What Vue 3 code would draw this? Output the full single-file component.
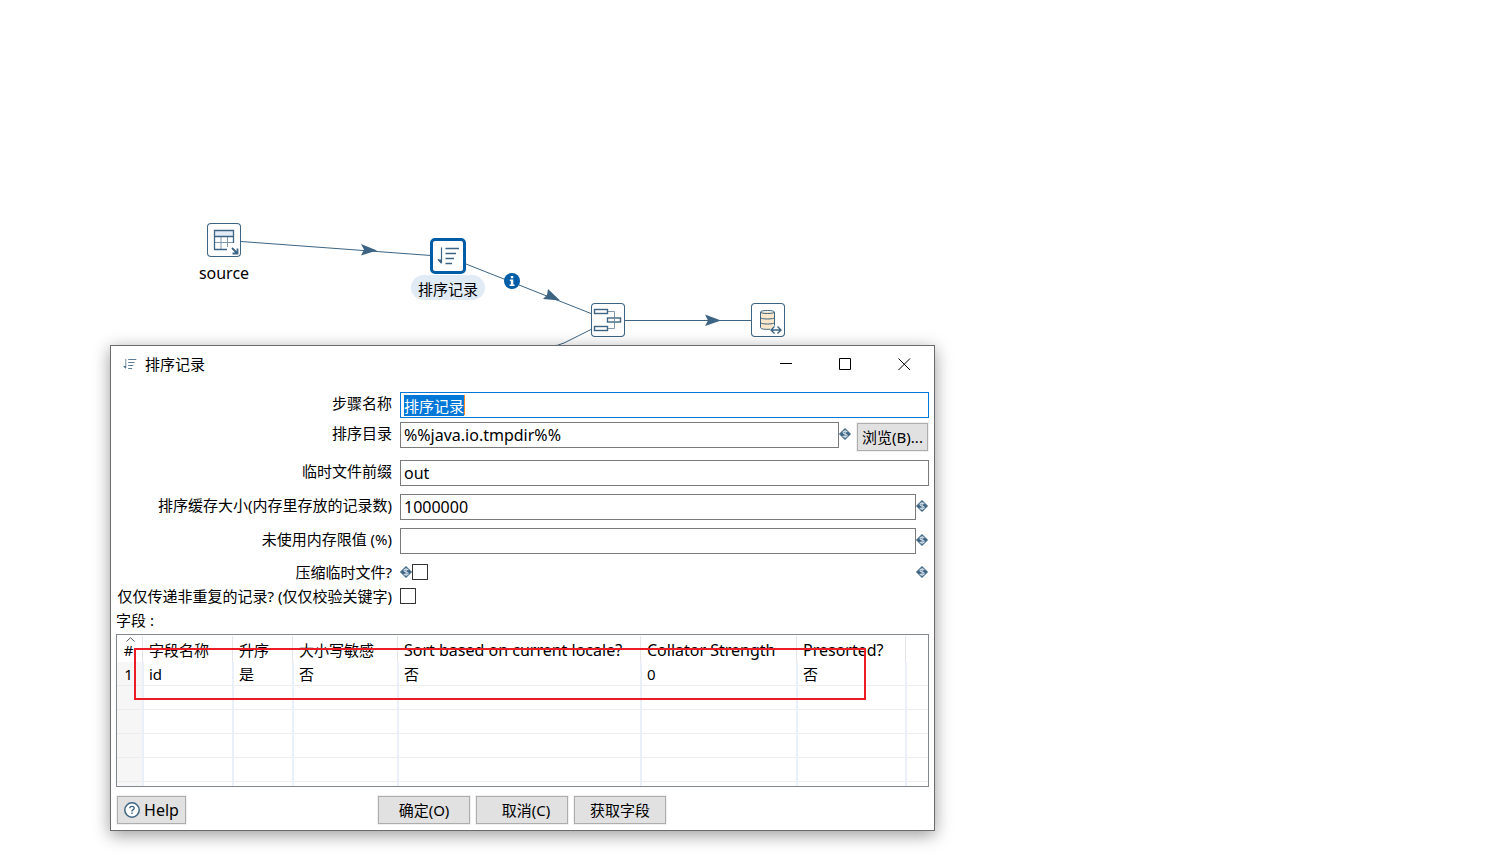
<script setup>
import { ref, onMounted } from 'vue'

const stepName = ref('排序记录')
const sortDir = ref('%%java.io.tmpdir%%')
const prefix = ref('out')
const cacheSize = ref('1000000')
const memoryLimit = ref('')
const compress = ref(false)
const unique = ref(false)
const nameInput = ref(null)

const columns = [
  { name: '字段名称' },
  { name: '升序' },
  { name: '大小写敏感' },
  { name: 'Sort based on current locale?', latin: true },
  { name: 'Collator Strength', latin: true },
  { name: 'Presorted?', latin: true }
]
const rows = [
  ['1', 'id', '是', '否', '否', '0', '否'],
  ['', '', '', '', '', '', ''],
  ['', '', '', '', '', '', ''],
  ['', '', '', '', '', '', ''],
  ['', '', '', '', '', '', '']
]

onMounted(() => {
  nameInput.value.focus()
  nameInput.value.select()
})
</script>

<template>
  <main class="canvas">
    <svg class="defs" width="0" height="0" aria-hidden="true">
      <symbol id="sort" viewBox="7 8 23 20">
        <path d="M11.5 9.5V24.5M8 21.5L11.5 25" fill="none" stroke="#3d6482" stroke-width="1.2" />
        <path d="M7.5 21.5H11.5V26Z" fill="#3d6482" />
        <path d="M15.500 10.500H29M15.500 15.500H26M15.500 20.500H24M15.500 25.500H22" fill="none" stroke="#3d6482" stroke-width="1.4" />
      </symbol>
      <symbol id="variable" viewBox="0 0 12 12">
        <path d="M6 .5L11.500 6L6 11.500L.5 6Z" fill="#3d6482" stroke="#3d6482" stroke-width="1" stroke-linejoin="round" />
        <path d="M8.200 4.200C7.600 2.900 4 2.700 4 4.600C4 6.500 8.200 5.500 8.200 7.500C8.200 9.300 4.500 9.200 3.800 7.900M6.100 2V10" fill="none" stroke="#c9d6e0" stroke-width="1.2" />
      </symbol>
    </svg>

    <svg class="hops" width="800" height="360" aria-hidden="true">
      <g fill="none" stroke="#3d6482">
        <path d="M241 241.500L431 255.500M466 264L591 313.500M625 320.500H751M591 329.500L564 343Q558 346 550 346" />
      </g>
      <g fill="#3d6482">
        <path d="M377 250.500L361 244L364 249.700L361 255.500Z" />
        <path d="M560 300.500L548 289L547 295L543 299Z" />
        <path d="M721 320.500L705 314.500L708 320.500L705 326Z" />
      </g>
      <circle cx="512" cy="281" r="8" fill="#005da6" />
      <path d="M510.800 276H513.300V278.200H510.800ZM509.800 279.500H513.300V284.500H514.500V286H509.600V284.500H510.800V281H509.800Z" fill="#fff" />
    </svg>

    <div class="node source">
      <svg width="34" height="34" viewBox="0 0 34 34" aria-hidden="true">
        <path d="M7.500 7.500H26.500V13.500H7.500Z" fill="#e1ebf5" />
        <path d="M14 13.500V26M20.500 13.500V24M8 19.500H26" fill="none" stroke="#7e99ad" />
        <path d="M20 26.500H7.500V7.500H26.500V20M7.500 13.500H26.500" fill="none" stroke="#3d6482" stroke-width="1.3" />
        <path d="M25 25L30 30M30.500 25.500V30.500H25.500" fill="none" stroke="#3d6482" stroke-width="1.8" />
      </svg>
    </div>
    <span class="caption source-caption latin">source</span>
    <div class="node sorter">
      <svg width="23" height="20" aria-hidden="true"><use href="#sort" /></svg>
    </div>
    <span class="caption sorter-caption">排序记录</span>
    <div class="node merge">
      <svg width="34" height="34" viewBox="0 0 34 34" aria-hidden="true">
        <path d="M17 8.500H23.500V25.500H17" fill="none" stroke="#7e99ad" />
        <g fill="#fff" stroke="#3d6482" stroke-width="1.4">
          <rect x="3.500" y="6.500" width="13" height="4" />
          <rect x="16.500" y="15" width="13" height="4" />
          <rect x="3.500" y="23.500" width="13" height="4" />
        </g>
        <path d="M23.500 15V19" stroke="#7e99ad" />
      </svg>
    </div>
    <div class="node database">
      <svg width="34" height="34" viewBox="0 0 34 34" aria-hidden="true">
        <path d="M9.500 9V24.500C9.500 27 23.500 27 23.500 24.500V9Z" fill="#fde7cb" />
        <path d="M19 26.200C14 26.700 9.500 26 9.500 24.500V9C9.500 7 23.500 7 23.500 9V23M9.500 9C9.500 11 23.500 11 23.500 9M9.500 14.500C9.500 16.500 23.500 16.500 23.500 14.500M9.500 19.500C9.500 21.500 23.500 21.500 23.500 19.500" fill="none" stroke="#3d6482" />
        <path d="M19 27L23 22.500H27L31 27L27 31H23Z" fill="#fff" />
        <path d="M23.500 23.500L20 27L23.500 30.500M26.500 23.500L30 27L26.500 30.500M20.500 27H29.500" fill="none" stroke="#3d6482" stroke-width="1.4" />
      </svg>
    </div>

    <section class="dialog" role="dialog" aria-labelledby="dialog-title">
      <header class="titlebar">
        <svg class="title-icon" width="14" height="12" aria-hidden="true"><use href="#sort" /></svg>
        <h1 id="dialog-title">排序记录</h1>
        <button class="control" type="button" aria-label="Minimize">
          <svg width="13" height="13" viewBox="0 0 13 13"><path d="M0 5.500H12" stroke="#000" /></svg>
        </button>
        <button class="control" type="button" aria-label="Maximize">
          <svg width="13" height="13" viewBox="0 0 13 13"><path d="M.5 .5H11.500V11.500H.5Z" fill="none" stroke="#000" /></svg>
        </button>
        <button class="control" type="button" aria-label="Close">
          <svg width="13" height="13" viewBox="0 0 13 13"><path d="M.5 .5L12 12M12 .5L.5 12" stroke="#000" /></svg>
        </button>
      </header>

      <form class="form" @submit.prevent>
        <div class="row tight">
          <label for="step">步骤名称</label>
          <div class="field">
            <input id="step" ref="nameInput" v-model="stepName" class="text name" type="text" />
            <i class="caret"></i>
          </div>
        </div>
        <div class="row">
          <label for="dir">排序目录</label>
          <div class="field inset">
            <input id="dir" v-model="sortDir" class="text" type="text" />
            <svg class="variable" width="12" height="12"><use href="#variable" /></svg>
            <button class="push browse" type="button">浏览(B)...</button>
          </div>
        </div>
        <div class="row">
          <label for="prefix">临时文件前缀</label>
          <div class="field"><input id="prefix" v-model="prefix" class="text" type="text" /></div>
        </div>
        <div class="row">
          <label for="cache">排序缓存大小(内存里存放的记录数)</label>
          <div class="field inset">
            <input id="cache" v-model="cacheSize" class="text" type="text" />
            <svg class="variable" width="12" height="12"><use href="#variable" /></svg>
          </div>
        </div>
        <div class="row tight">
          <label for="limit">未使用内存限值 (%)</label>
          <div class="field inset">
            <input id="limit" v-model="memoryLimit" class="text" type="text" />
            <svg class="variable" width="12" height="12"><use href="#variable" /></svg>
          </div>
        </div>
        <div class="checks">
          <div class="row check">
            <label for="compress">压缩临时文件?</label>
            <div class="field inset">
              <svg width="12" height="12"><use href="#variable" /></svg>
              <input id="compress" v-model="compress" class="box" type="checkbox" />
              <svg class="end" width="12" height="12"><use href="#variable" /></svg>
            </div>
          </div>
          <div class="row check">
            <label for="unique">仅仅传递非重复的记录? (仅仅校验关键字)</label>
            <div class="field"><input id="unique" v-model="unique" class="box" type="checkbox" /></div>
          </div>
        </div>
        <p id="fields" class="fields-label">字段 :</p>

        <div class="grid">
          <table aria-labelledby="fields">
            <colgroup>
              <col class="c-index" /><col class="c-name" /><col class="c-order" /><col class="c-case" />
              <col class="c-locale" /><col class="c-strength" /><col class="c-presorted" /><col />
            </colgroup>
            <thead>
              <tr>
                <th class="index">
                  <svg class="sort-mark" width="9" height="5" viewBox="0 0 9 5"><path d="M.5 4.500L4.500 .7L8.500 4.500" fill="none" stroke="#555" /></svg>#
                </th>
                <th v-for="column in columns" :key="column.name" :class="{ latin: column.latin }">{{ column.name }}</th>
                <th></th>
              </tr>
            </thead>
            <tbody>
              <tr v-for="(row, r) in rows" :key="r">
                <td v-for="(cell, c) in row" :key="c" :class="{ index: c === 0 }">{{ cell }}</td>
                <td></td>
              </tr>
              <tr class="stub">
                <td v-for="n in 8" :key="n" :class="{ index: n === 1 }"></td>
              </tr>
            </tbody>
          </table>
          <div class="highlight"></div>
        </div>

        <footer class="actions">
          <button class="push help latin" type="button">
            <svg width="16" height="16" viewBox="0 0 16 16" aria-hidden="true">
              <circle cx="8" cy="8" r="7.2" fill="#fff" stroke="#3d6482" stroke-width="1.5" />
              <path d="M5.800 6.300C5.800 3.700 10.200 3.700 10.200 6.200C10.200 7.700 8 7.700 8 9.400M8 10.600V12" fill="none" stroke="#3d6482" stroke-width="1.4" />
            </svg>
            <span>Help</span>
          </button>
          <div class="commands">
            <button class="push" type="submit">确定(O)</button>
            <button class="push" type="button">&nbsp;&nbsp;取消(C)</button>
            <button class="push" type="button">获取字段</button>
          </div>
        </footer>
      </form>
    </section>
  </main>
</template>

<style>
body {
  background: #fff;
}
</style>

<style scoped>
* {
  box-sizing: border-box;
}
.canvas {
  position: relative;
  min-height: 100vh;
  overflow: hidden;
  background: #fff;
  color: #000;
  font: 15px/22px "Noto Sans", "Noto Sans CJK SC", sans-serif;
}
svg {
  display: block;
  flex: none;
}
.defs,
.hops {
  position: absolute;
  left: 0;
  top: 0;
}
.node {
  position: absolute;
  display: grid;
  place-items: center;
  width: 34px;
  height: 34px;
  overflow: hidden;
  border-radius: 4px;
  background: #fff;
  box-shadow: inset 0 0 0 1px #3d6482;
}
.source { left: 207px; top: 223px; }
.merge { left: 591px; top: 303px; }
.database { left: 751px; top: 303px; }
.sorter {
  left: 430px;
  top: 238px;
  width: 36px;
  height: 36px;
  border: 3px solid #005da6;
  border-radius: 5px;
  box-shadow: none;
}
.caption {
  position: absolute;
  transform: translateX(-50%);
  white-space: nowrap;
}
.source-caption {
  left: 224px;
  top: 262px;
}
.sorter-caption {
  left: 448px;
  top: 275px;
  padding: 3px 7px 0;
  border-radius: 13px;
  background: #e1ebf5;
}
.dialog {
  position: absolute;
  left: 110px;
  right: 550px;
  top: 345px;
  border: 1px solid #6b6b6e;
  background: #fff;
  box-shadow: 0 4px 16px rgba(0, 0, 0, 0.4);
}
.titlebar {
  display: flex;
  align-items: center;
  height: 36px;
  padding-left: 12px;
}
h1 {
  flex: 1;
  margin: 0 0 0 8px;
  font: inherit;
}
.control {
  display: grid;
  place-items: center;
  width: 59px;
  height: 36px;
  padding: 0;
  border: 0;
  background: none;
}
.form {
  padding: 10px 5px 6px;
}
.row {
  display: grid;
  grid-template-columns: 276px 1fr;
  column-gap: 8px;
  align-items: start;
  margin-bottom: 8px;
}
.row.tight {
  margin-bottom: 4px;
}
.row label {
  text-align: right;
  white-space: nowrap;
}
.field {
  position: relative;
  display: flex;
  align-items: flex-start;
}
.field.inset {
  padding-right: 1px;
}
.text {
  flex: 1;
  min-width: 0;
  height: 26px;
  margin: 0;
  padding: 0 3px;
  border: 1px solid #7a7a7a;
  border-radius: 0;
  outline: 0;
  background: #fff;
  color: #000;
  font: 16px/20px "Noto Sans", "Noto Sans CJK SC", sans-serif;
}
.text:focus {
  border-color: #0078d7;
}
.text.name {
  font-size: 15px;
}
.text::selection {
  background: #0078d7;
  color: #fff;
}
.caret {
  position: absolute;
  left: 64px;
  top: 3px;
  width: 1px;
  height: 20px;
  background: #ff8728;
}
.variable {
  margin-top: 6px;
}
.push {
  min-width: 92px;
  height: 28px;
  padding: 0;
  border: 1px solid #adadad;
  border-radius: 0;
  background: #e1e1e1;
  box-shadow: 0 0 0 1px #f0f0f0;
  color: #000;
  font: inherit;
  white-space: nowrap;
}
.push.browse {
  min-width: 71px;
  margin: 1px 0 1px 6px;
}
.checks {
  padding-top: 2px;
}
.row.check {
  align-items: center;
  height: 24px;
  margin: 0;
}
.check .field {
  align-items: center;
}
.box {
  appearance: none;
  width: 16px;
  height: 16px;
  margin: 0;
  border: 1px solid #333;
  background: #fff;
}
.box:checked {
  background: #0078d7;
}
.end {
  margin-left: auto;
}
.fields-label {
  margin: 0;
  height: 26px;
  line-height: 24px;
}
.grid {
  position: relative;
  border: 1px solid #828790;
}
table {
  width: 100%;
  table-layout: fixed;
  border-collapse: separate;
  border-spacing: 0;
}
.c-index { width: 27px; }
.c-name { width: 90px; }
.c-order { width: 60px; }
.c-case { width: 105px; }
.c-locale { width: 243px; }
.c-strength { width: 156px; }
.c-presorted { width: 109px; }
th,
td {
  padding: 0 0 0 5px;
  text-align: left;
  font-weight: normal;
  white-space: nowrap;
}
th {
  position: relative;
  height: 27px;
  padding-top: 2px;
}
th:not(:last-child)::after {
  content: "";
  position: absolute;
  top: 1px;
  right: 1px;
  bottom: 0;
  width: 1px;
  background: #e5e5e5;
}
td {
  height: 24px;
  border-right: 2px solid #e9f0fa;
  border-bottom: 1px solid #ededed;
}
td:last-child {
  border-right: 0;
}
.index {
  padding-left: 0;
  text-align: center;
}
th.index {
  padding-right: 4px;
}
td.index {
  padding-right: 2px;
  background: #f6f6f6;
}
.stub td {
  height: 4px;
  border-bottom: 0;
}
.latin {
  font-size: 16px;
}
.sort-mark {
  position: absolute;
  left: 9px;
  top: 2px;
}
.highlight {
  position: absolute;
  left: 17px;
  right: 62px;
  top: 13px;
  height: 52px;
  border: 2px solid #ed1c24;
  pointer-events: none;
}
.actions {
  display: grid;
  grid-template-columns: 253px 1fr;
  column-gap: 8px;
  margin-top: 9px;
  padding-left: 1px;
}
.help {
  display: flex;
  align-items: center;
  justify-content: center;
  justify-self: start;
  gap: 4px;
  min-width: 69px;
}
.push.latin {
  font-size: 16px;
}
.commands {
  display: flex;
  gap: 6px;
}
</style>
